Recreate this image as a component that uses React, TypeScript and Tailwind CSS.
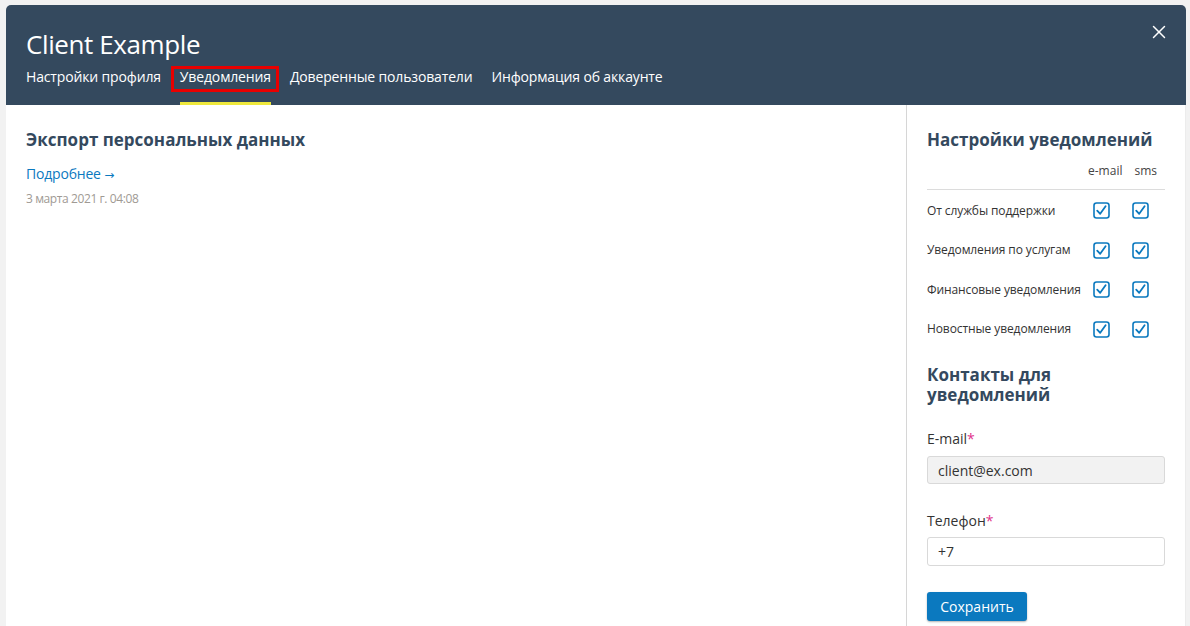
import { X } from 'lucide-react';

const tabs = ['Настройки профиля', 'Уведомления', 'Доверенные пользователи', 'Информация об аккаунте'];

const rows = ['От службы поддержки', 'Уведомления по услугам', 'Финансовые уведомления', 'Новостные уведомления'];

function Check() {
  return (
    <svg width="17" height="17" viewBox="0 0 17 17" className="block">
      <rect x="1" y="1" width="15" height="15" rx="2.5" fill="white" stroke="#0b79bf" strokeWidth="1.6" />
      <path d="M4.2 8.6 L7.2 11.8 L12.6 4.2" fill="none" stroke="#0b79bf" strokeWidth="1.8" strokeLinecap="round" strokeLinejoin="round" />
    </svg>
  );
}

export default function App() {
  return (
    <div className="min-h-screen bg-[#f2f2f2] pt-[5px] pl-[6px] pr-[4px] font-['Open_Sans',sans-serif]">
      <div className="bg-white rounded-t-[5px] overflow-hidden">
        {/* Header */}
        <div className="relative bg-[#34495e] h-[100px] px-5">
          <h1 className="pt-[24px] text-[26px] leading-[30px] font-medium text-white tracking-[-0.4px]">Client Example</h1>
          <nav className="flex mt-[8px] gap-[19px]">
            {tabs.map((t, i) => (
              <div key={t} className="relative">
                <div className="text-[14px] leading-[20px] text-white tracking-[-0.15px]">{t}</div>
                {i === 1 && (
                  <>
                    <div className="absolute -left-[9px] -right-[8px] -top-[1px] -bottom-[5px] border-[3px] border-[#e80000]" />
                    <div className="absolute left-0 right-0 top-[35px] h-[3px] bg-[#eee83c]" />
                  </>
                )}
              </div>
            ))}
          </nav>
          <button className="absolute right-[16px] top-[16px] text-white">
            <X className="h-[22px] w-[22px]" strokeWidth={1.6} />
          </button>
        </div>

        {/* Body */}
        <div className="flex h-[521px]">
          <div className="flex-1 border-r border-[#d6d6d6] px-5 pt-[23px]">
            <h2 className="text-[17px] leading-[24px] font-bold text-[#34495e]">Экспорт персональных данных</h2>
            <a className="block mt-[13px] text-[14px] leading-[18px] text-[#0b79bf] tracking-[-0.2px]">
              Подробнее <span className="font-['DejaVu_Sans'] text-[12px]">→</span>
            </a>
            <div className="mt-[7px] text-[12px] leading-[16px] text-[#a09a94] tracking-[-0.4px]">3 марта 2021 г. 04:08</div>
          </div>

          <div className="w-[279px] border-r border-[#ececec] pl-5 pr-5 pt-[23px]">
            <h2 className="text-[17px] leading-[24px] font-bold text-[#34495e] whitespace-nowrap">Настройки уведомлений</h2>
            <div className="flex justify-end gap-[12px] mt-[11px] pb-[10px] border-b border-[#dcdcdc] text-[12px] leading-[16px] text-[#444] pr-[8px]">
              <span>e-mail</span>
              <span>sms</span>
            </div>
            <div className="flex flex-col pt-[1px]">
              {rows.map((r) => (
                <div key={r} className="flex items-center h-[39.5px] text-[12px] text-[#333] tracking-[-0.1px]">
                  <span className="flex-1 whitespace-nowrap">{r}</span>
                  <div className="flex gap-[22px] pr-[16px]">
                    <Check />
                    <Check />
                  </div>
                </div>
              ))}
            </div>

            <h2 className="mt-[16px] text-[17px] leading-[20px] font-bold text-[#34495e]">
              Контакты для
              <br />
              уведомлений
            </h2>

            <label className="block mt-[25px] text-[14px] leading-[18px] text-[#333]">
              E-mail<span className="text-[#e0338a]">*</span>
            </label>
            <div className="mt-[8px] h-[28px] rounded-[3px] border border-[#d9d9d9] bg-[#f2f2f2] px-[10px] flex items-center text-[14px] text-[#333]">
              client@ex.com
            </div>

            <label className="block mt-[28px] text-[14px] leading-[18px] text-[#333]">
              Телефон<span className="text-[#e0338a]">*</span>
            </label>
            <div className="mt-[7px] h-[29px] rounded-[3px] border border-[#d9d9d9] bg-white px-[10px] flex items-center text-[14px] text-[#333]">
              +7
            </div>

            <button className="mt-[26px] h-[29px] w-[100px] rounded-[3px] bg-[#0b79bf] text-white text-[14px] shadow-[0_1px_2px_rgba(0,0,0,0.3)]">
              Сохранить
            </button>
          </div>
        </div>
      </div>
    </div>
  );
}
